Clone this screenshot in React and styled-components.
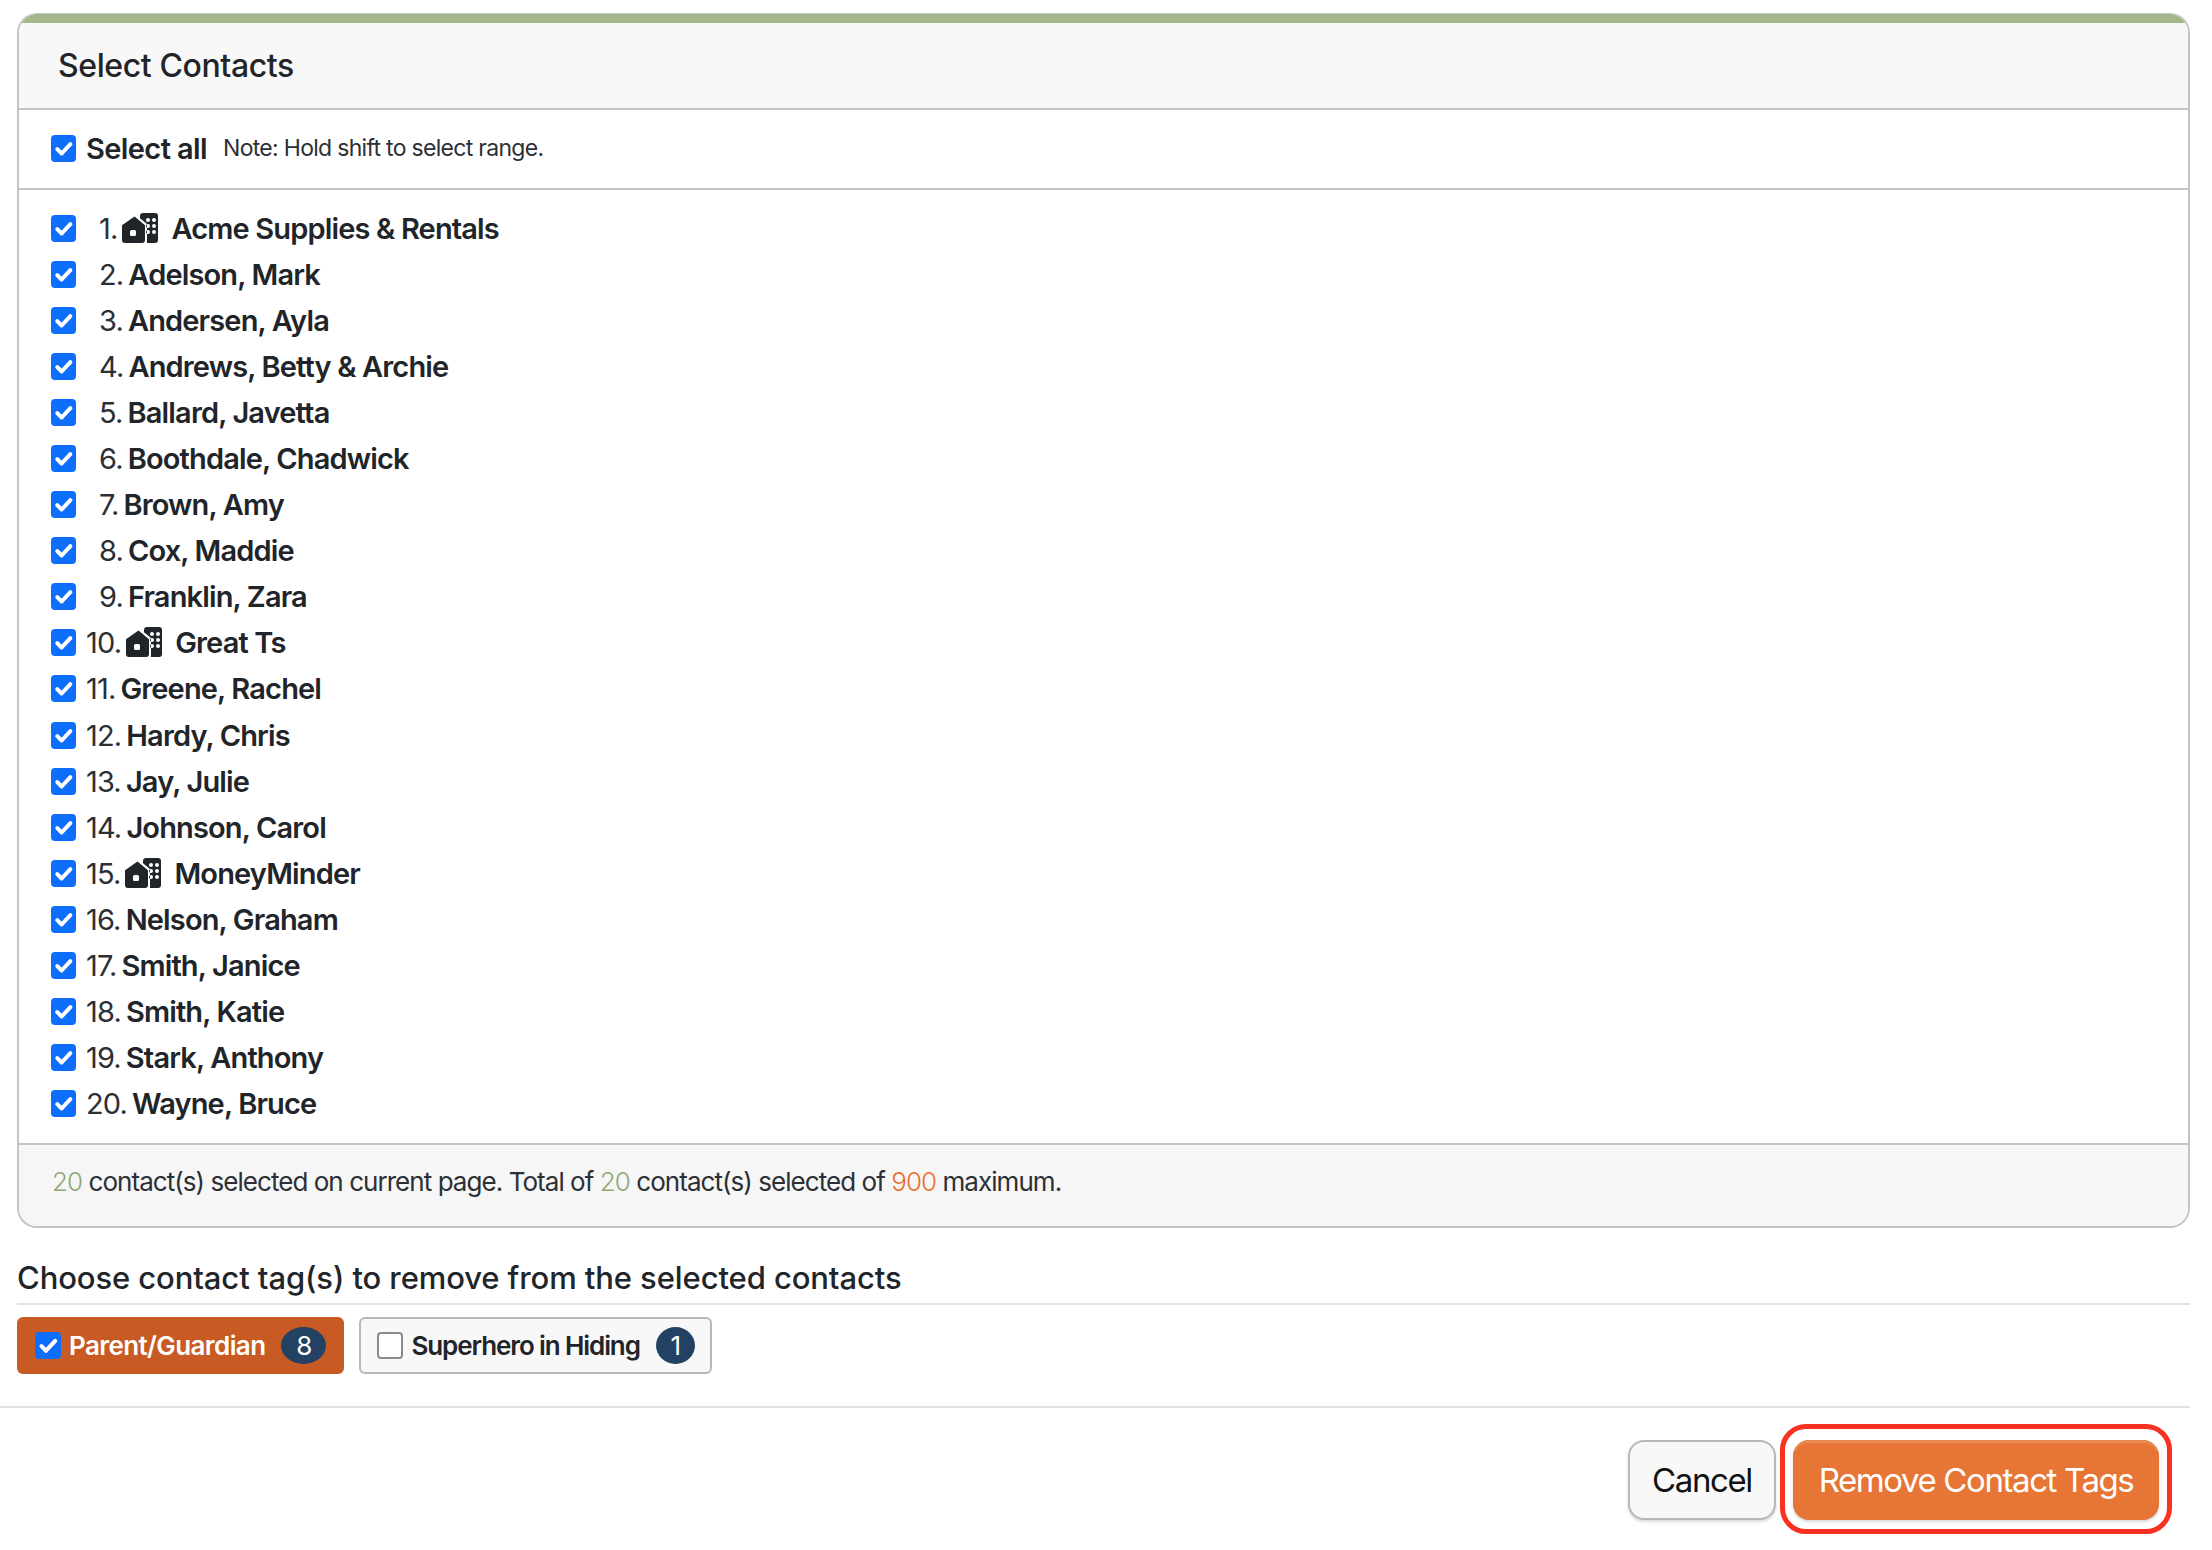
import React from 'react';
import styled, {createGlobalStyle} from 'styled-components';

const GlobalStyle = createGlobalStyle`
  body {
    margin: 0;
    background: #fff;
    color: #212529;
    font-family: Inter, "Noto Sans", sans-serif;
  }
`;

const Page = styled.div`
  width: 2212px;
  height: 1550px;
  padding-top: 13px;
  box-sizing: border-box;
  overflow: hidden;
`;

const Card = styled.section`
  margin: 0 22px 0 17px;
  height: 1215px;
  box-sizing: border-box;
  display: flex;
  flex-direction: column;
  border: 2px solid #c4c4c4;
  border-top-width: 1px;
  border-radius: 20px;
  overflow: hidden;
`;

const CardHeader = styled.header`
  height: 96px;
  flex: none;
  box-sizing: border-box;
  display: flex;
  align-items: center;
  padding-left: 39px;
  background: #f8f8f8;
  border-top: 9px solid #a4b78a;
  border-bottom: 2px solid #c4c4c4;
  font-size: 32px;
  font-weight: 500;
  letter-spacing: -0.4px;
`;

const SelectAllRow = styled.div`
  height: 80px;
  flex: none;
  box-sizing: border-box;
  display: flex;
  align-items: center;
  padding: 0 0 2px 32px;
  border-bottom: 2px solid #c4c4c4;
`;

const SelectAllLabel = styled.span`
  margin-left: 10px;
  font-size: 29px;
  font-weight: 600;
  letter-spacing: -0.6px;
`;

const Note = styled.span`
  margin-left: 16px;
  font-size: 23px;
  letter-spacing: -0.7px;
  color: #2c3035;
`;

const List = styled.ul`
  flex: 1;
  margin: 0;
  padding: 15px 0 0 32px;
  list-style: none;
`;

const Row = styled.li`
  height: 46.1px;
  display: flex;
  align-items: center;
  font-size: 29px;
  letter-spacing: -0.85px;
  white-space: pre;
`;

const RowNumber = styled.span`
  margin-left: ${p => (p.$wide ? '10px' : '23px')};
  margin-right: 5px;
  color: #2c3035;
`;

const RowName = styled.strong`
  font-weight: 600;
`;

const BuildingIcon = styled.svg`
  width: 36px;
  height: 30px;
  margin: -1px 13px 0 0;
  flex: none;
  fill: #212529;
`;

const Box = styled.input.attrs({type: 'checkbox'})`
  appearance: none;
  width: ${p => p.$w || 25}px;
  height: 27px;
  margin: 0;
  flex: none;
  box-sizing: border-box;
  border-radius: 4px;
  border: 2px solid #8a8a8a;
  background: #fff;

  &:checked {
    border: none;
    background: #0d6efd url("data:image/svg+xml,%3Csvg xmlns='http://www.w3.org/2000/svg' viewBox='0 0 20 20'%3E%3Cpath fill='none' stroke='%23fff' stroke-linecap='round' stroke-linejoin='round' stroke-width='3.2' d='m5 10.500 3.500 3.500 7-7.500'/%3E%3C/svg%3E") center / 100% 100% no-repeat;
  }
`;

const CardFooter = styled.footer`
  height: 83px;
  flex: none;
  box-sizing: border-box;
  padding: 21px 0 0 33px;
  background: #f6f6f6;
  border-top: 2px solid #c4c4c4;
  font-size: 26px;
  letter-spacing: -0.95px;
  color: #2c3035;
`;

const Count = styled.span`
  color: ${p => p.$color};
  font-weight: 300;
`;

const TagSection = styled.div`
  margin: 33px 22px 0 0;
  padding-left: 17px;
  border-bottom: 2px solid #e2e2e2;
  height: 145px;
`;

const TagHeading = styled.h2`
  margin: 0 0 12px;
  padding-bottom: 8px;
  height: 34px;
  border-bottom: 2px solid #e2e2e2;
  font-size: 31px;
  line-height: 34px;
  font-weight: 500;
  letter-spacing: -0.1px;
`;

const Tags = styled.div`
  display: flex;
  gap: 15px;
`;

const Tag = styled.label`
  height: 57px;
  box-sizing: border-box;
  display: flex;
  align-items: center;
  padding: ${p => (p.$active ? '0 18px' : '0 15px 0 16px')};
  gap: 8px;
  border-radius: 6px;
  font-size: 26px;
  font-weight: 600;
  letter-spacing: ${p => (p.$active ? '-0.6px' : '-1.1px')};
  background: ${p => (p.$active ? '#c85a23' : '#f8f8f8')};
  color: ${p => (p.$active ? '#fff' : '#212529')};
  border: ${p => (p.$active ? 'none' : '2px solid #b8b8b8')};
`;

const Badge = styled.span`
  width: ${p => p.$w}px;
  height: 37px;
  margin-left: 8px;
  display: flex;
  align-items: center;
  justify-content: center;
  border-radius: 50%;
  background: #234263;
  color: #fff;
  font-size: 26px;
  font-weight: 400;
`;

const Actions = styled.div`
  display: flex;
  justify-content: flex-end;
  align-items: center;
  gap: 17px;
  margin-top: 32px;
  padding-right: 53px;
`;

const Button = styled.button`
  height: 80px;
  box-sizing: border-box;
  border-radius: 16px;
  padding: 0;
  font: 400 33px Inter, "Noto Sans", sans-serif;
  letter-spacing: -1.4px;
`;

const CancelButton = styled(Button)`
  width: 148px;
  background: #f8f8f8;
  color: #111;
  border: 2px solid #b8b8b8;
  box-shadow: 0 2px 3px rgba(0, 0, 0, 0.15);
`;

const RemoveButton = styled(Button)`
  position: relative;
  width: 366px;
  background: #e67536;
  color: #fff;
  border: none;
  box-shadow: inset 0 3px 0 #ea8a55, 0 2px 3px rgba(0, 0, 0, 0.15);

  &::after {
    content: '';
    position: absolute;
    inset: -16px -13px -14px -13px;
    border: 5px solid #f93120;
    border-radius: 26px;
  }
`;

const contacts = [
    {name: 'Acme Supplies & Rentals', org: true},
    {name: 'Adelson, Mark'},
    {name: 'Andersen, Ayla'},
    {name: 'Andrews, Betty & Archie'},
    {name: 'Ballard, Javetta'},
    {name: 'Boothdale, Chadwick'},
    {name: 'Brown, Amy'},
    {name: 'Cox, Maddie'},
    {name: 'Franklin, Zara'},
    {name: 'Great Ts', org: true},
    {name: 'Greene, Rachel'},
    {name: 'Hardy, Chris'},
    {name: 'Jay, Julie'},
    {name: 'Johnson, Carol'},
    {name: 'MoneyMinder', org: true},
    {name: 'Nelson, Graham'},
    {name: 'Smith, Janice'},
    {name: 'Smith, Katie'},
    {name: 'Stark, Anthony'},
    {name: 'Wayne, Bruce'},
];

const Building = () => (
    <BuildingIcon viewBox="0 0 36 30">
        <path d="M12.5 3.5 23 12.2V27a3 3 0 0 1-3 3H3a3 3 0 0 1-3-3V12.2L12.5 3.5Zm-3 13.5a1.5 1.5 0 0 0-1.5 1.500v3a1.500 1.500 0 0 0 1.500 1.500h3a1.500 1.500 0 0 0 1.500-1.500v-3a1.500 1.500 0 0 0-1.500-1.500h-3Z" fillRule="evenodd"/>
        <path d="M21 0h12a3 3 0 0 1 3 3v24a3 3 0 0 1-3 3h-8V11L18 5.200V3a3 3 0 0 1 3-3Zm5 5a2 2 0 1 0 0 4 2 2 0 0 0 0-4Zm6 0a2 2 0 1 0 0 4 2 2 0 0 0 0-4Zm-6 6a2 2 0 1 0 0 4 2 2 0 0 0 0-4Zm6 0a2 2 0 1 0 0 4 2 2 0 0 0 0-4Zm-6 6a2 2 0 1 0 0 4 2 2 0 0 0 0-4Zm6 0a2 2 0 1 0 0 4 2 2 0 0 0 0-4Z" fillRule="evenodd"/>
    </BuildingIcon>
);

const App = () => {
    return (
        <Page>
            <GlobalStyle/>
            <Card>
                <CardHeader>Select Contacts</CardHeader>
                <SelectAllRow>
                    <Box defaultChecked/>
                    <SelectAllLabel>Select all</SelectAllLabel>
                    <Note>Note: Hold shift to select range.</Note>
                </SelectAllRow>
                <List>
                    {contacts.map((c, i) => (
                        <Row key={c.name}>
                            <Box defaultChecked/>
                            <RowNumber $wide={i >= 9}>{i + 1}.</RowNumber>
                            {c.org && <Building/>}
                            <RowName>{c.name}</RowName>
                        </Row>
                    ))}
                </List>
                <CardFooter>
                    <Count $color="#8fa873">20</Count> contact(s) selected on current page. Total of{' '}
                    <Count $color="#8fa873">20</Count> contact(s) selected of{' '}
                    <Count $color="#e8702f">900</Count> maximum.
                </CardFooter>
            </Card>
            <TagSection>
                <TagHeading>Choose contact tag(s) to remove from the selected contacts</TagHeading>
                <Tags>
                    <Tag $active>
                        <Box $w={26} defaultChecked/>
                        Parent/Guardian
                        <Badge $w={45}>8</Badge>
                    </Tag>
                    <Tag>
                        <Box $w={26}/>
                        Superhero in Hiding
                        <Badge $w={39}>1</Badge>
                    </Tag>
                </Tags>
            </TagSection>
            <Actions>
                <CancelButton>Cancel</CancelButton>
                <RemoveButton>Remove Contact Tags</RemoveButton>
            </Actions>
        </Page>
    );
};

export default App;
